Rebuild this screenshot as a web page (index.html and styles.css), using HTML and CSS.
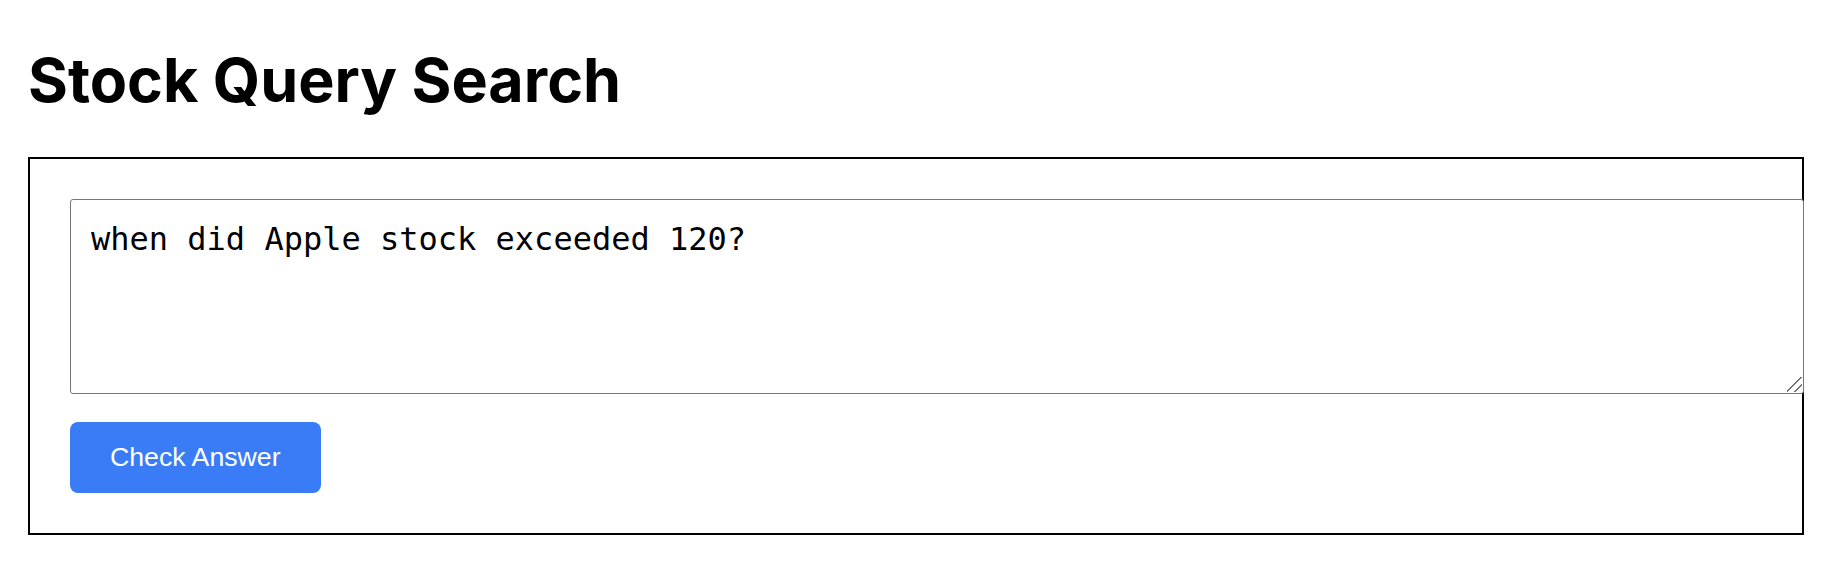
FILE: index.html
```html
<!DOCTYPE html>
<html lang="en">
<head>
<meta charset="utf-8">
<title>Stock Query Search</title>
<link rel="stylesheet" href="styles.css">
</head>
<body>
<main class="page">
  <h1 class="title">Stock Query Search</h1>
  <section class="card">
    <div class="query-wrap">
      <textarea class="query" rows="4">when did Apple stock exceeded 120?</textarea>
    </div>
    <div class="actions">
      <button class="check-btn" type="button">Check Answer</button>
    </div>
  </section>
</main>
</body>
</html>
```

FILE: styles.css
```css
html, body {
  margin: 0;
  padding: 0;
  background: #ffffff;
}

body {
  font-family: "Liberation Sans", Arial, sans-serif;
  color: #000000;
}

.page {
  padding: 0 24px 0 28px;
}

.title {
  margin: 0;
  padding: 44px 0 41px 0;
  font-family: Inter, "Liberation Sans", Arial, sans-serif;
  font-size: 61px;
  font-weight: 700;
  line-height: 72px;
  letter-spacing: 0;
}

.card {
  border: 2px solid #000000;
  padding: 40px;
  display: flex;
  flex-direction: column;
  gap: 28px;
}

.query-wrap {
  position: relative;
  width: calc(100% + 42px);
}

.query-wrap::after {
  content: "";
  position: absolute;
  right: 2px;
  bottom: 2px;
  width: 15px;
  height: 15px;
  pointer-events: none;
  background: linear-gradient(135deg,
    transparent 0 46%,
    #6f6f6f 46% 53%,
    transparent 53% 72%,
    #6f6f6f 72% 79%,
    transparent 79%);
}

.query {
  display: block;
  box-sizing: border-box;
  width: 100%;
  height: 195px;
  margin: 0;
  padding: 20px;
  border: 1px solid #767676;
  border-radius: 3px;
  font-family: "DejaVu Sans Mono", monospace;
  font-size: 32px;
  line-height: normal;
  color: #000000;
  background: #ffffff;
  resize: none;
}

.actions {
  display: flex;
}

.check-btn {
  padding: 20px 40px;
  border: none;
  border-radius: 8px;
  background: #3a7cf6;
  color: #ffffff;
  font-family: "Liberation Sans", Arial, sans-serif;
  font-size: 26.7px;
  line-height: 31px;
  cursor: pointer;
}
```
